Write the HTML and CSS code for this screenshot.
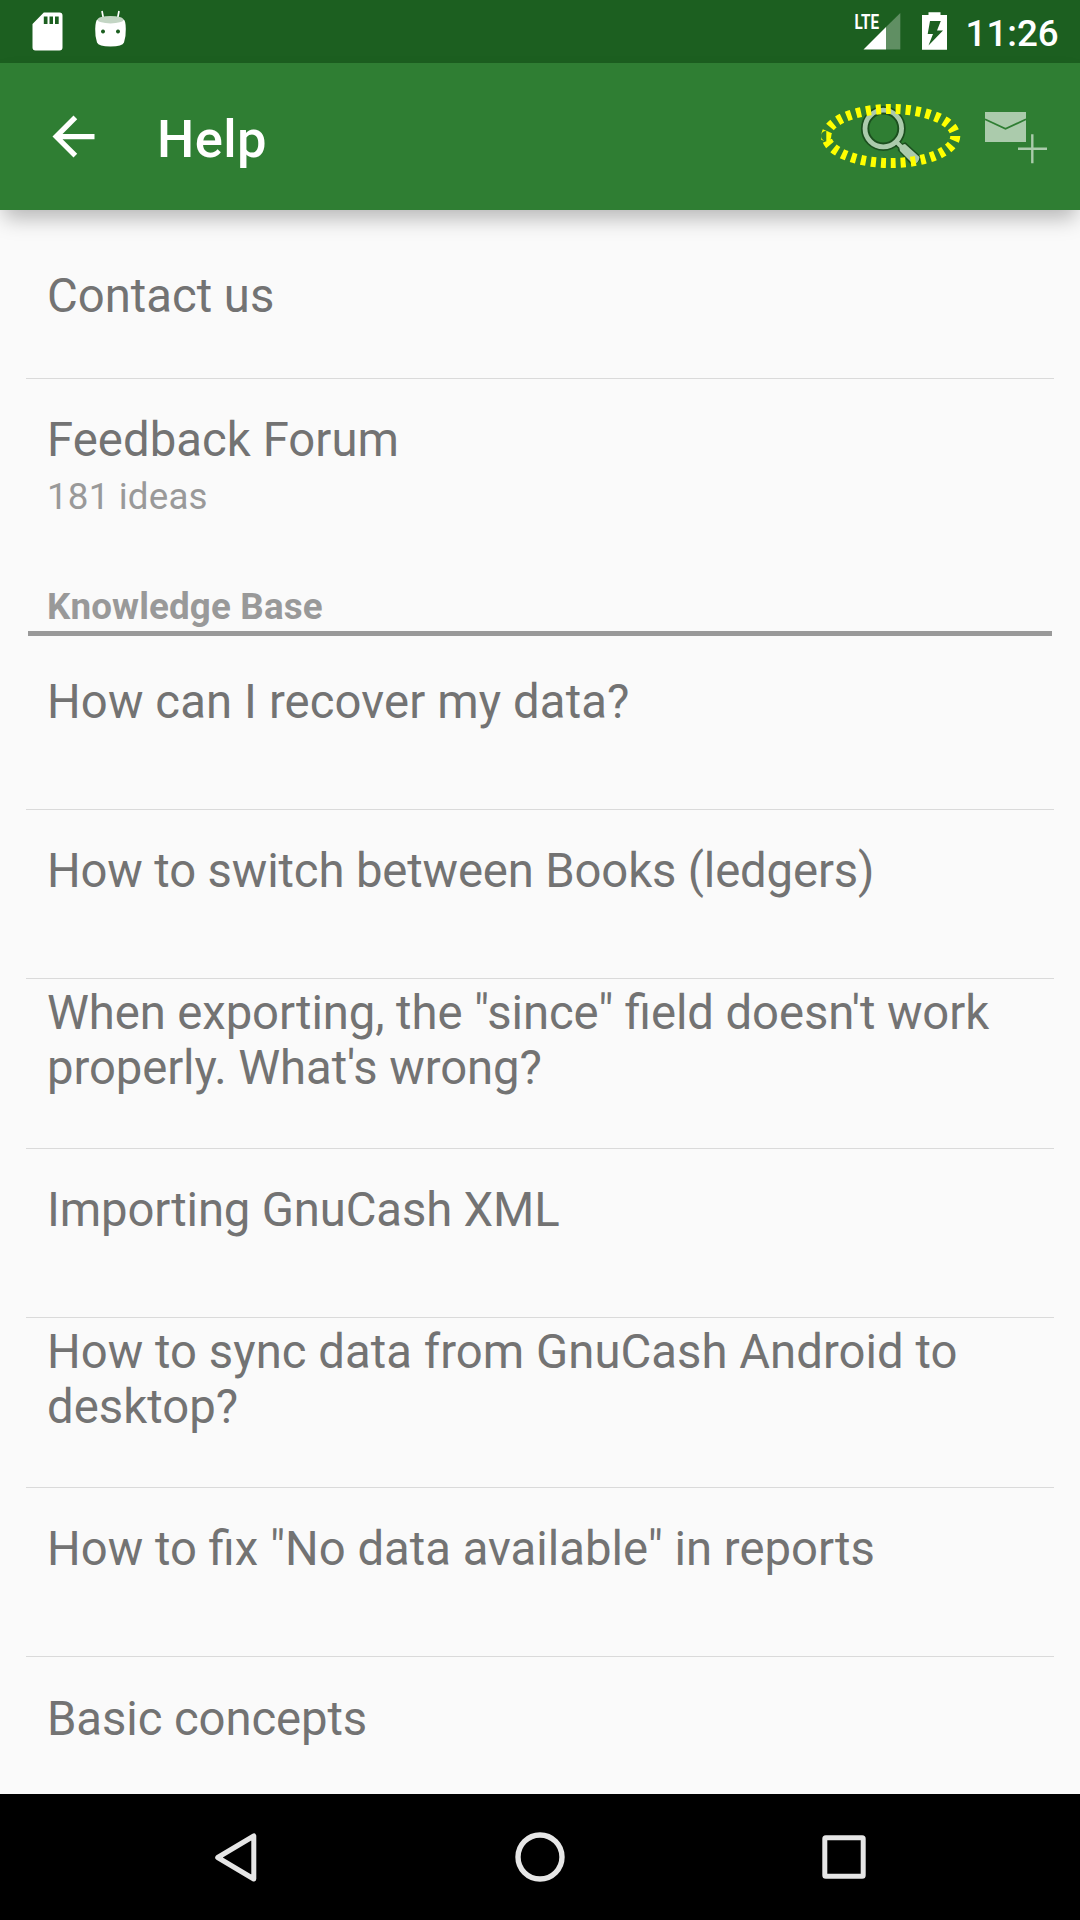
FILE: index.html
```html
<!DOCTYPE html>
<html lang="en">
<head>
<meta charset="utf-8">
<title>Help</title>
<link rel="stylesheet" href="styles.css">
</head>
<body>
<div class="screen">
  <div class="status-bar">
    <svg class="status-notifications" viewBox="0 0 140 63" width="140" height="63">
      <path fill="#fff" fill-rule="evenodd" d="M43.8 12.5H59.500a3 3 0 0 1 3 3V47.500a3 3 0 0 1-3 3H35.500a3 3 0 0 1-3-3V24zM43.800 16.500V24H47.500V16.500zM49.500 16.500V24H53V16.500zM55 16.500V24H58.700V16.500z"/>
      <path stroke="#fff" stroke-width="1.700" d="M102 11l1.500 8M119 11l-1.500 8"/>
      <path fill="#fff" fill-rule="evenodd" d="M97.500 19.500Q110.500 26 123.500 19.500Q125.700 20 125.800 29Q126 37 124 42.500Q122.500 46.500 110.500 46.500Q98.500 46.500 97 42.500Q95 37 95.200 29Q95.500 20 97.500 19.500zM103 29.500a2 2 0 1 0 .01 0zM118 29.500a2 2 0 1 0 .01 0z"/>
      <ellipse cx="110.500" cy="19.700" rx="13" ry="3.700" fill="#c3d5c4"/>
    </svg>
    <svg class="status-system" viewBox="850 0 105 63" width="105" height="63">
      <text class="lte" x="854.500" y="29" textLength="24.500" lengthAdjust="spacingAndGlyphs">LTE</text>
      <path fill="#fff" d="M863.500 49.500L886 27V49.500z"/>
      <path fill="#fff" fill-opacity=".3" d="M886 27L900.300 13V49.500H886z"/>
      <path fill="#fff" fill-rule="evenodd" d="M928.500 12.300H940.500V15H947V49.800H922V15H928.500zM930 21L927.700 34H933L928.500 45.500L943 30.500H937L940.800 21z"/>
    </svg>
    <span class="clock">11:26</span>
  </div>
  <header class="app-bar">
    <svg class="back" viewBox="0 0 24 24" width="63" height="63"><path fill="#fff" d="M20 11H7.830l5.590-5.590L12 4l-8 8 8 8 1.410-1.410L7.830 13H20v-2z"/></svg>
    <h1 class="title">Help</h1>
    <svg class="actions" viewBox="815 63 265 147" width="265" height="147">
      <g fill="none" stroke="#123c15" stroke-opacity=".7">
        <circle cx="883.300" cy="128.500" r="18.200" stroke-width="8.400"/>
        <path stroke-width="2.500" stroke-linejoin="round" d="M895 144l5 4.500l-1 1.500L913 165L920.500 158L905 143.500L902 145L897.500 140.500"/>
      </g>
      <circle cx="883.300" cy="128.500" r="18.300" fill="none" stroke="#abcbac" stroke-width="4.800"/>
      <path stroke="#abcbac" stroke-width="4" d="M895.500 141l6 6"/>
      <path fill="#abcbac" d="M899.500 148.500Q901 144.500 905 144L919.500 157Q919 163 913.500 164.500L900 151z"/>
      <ellipse cx="890.800" cy="136" rx="64.500" ry="27" fill="none" stroke="#ff0" stroke-width="10" pathLength="300" stroke-dasharray="5 5"/>
      <path fill="#abcbac" d="M985 112h41v30h-41z"/>
      <path fill="none" stroke="#2f7e33" stroke-width="1.800" d="M985 119.300l20.500 9.500 20.500-9.500"/>
      <path stroke="#abcbac" stroke-width="2.400" d="M1018 148.700h29M1032.300 134.300v29"/>
    </svg>
  </header>
  <main class="content">
    <div class="row contact"><span class="name">Contact us</span></div>
    <div class="row forum"><span class="name">Feedback Forum</span><span class="detail">181 ideas</span></div>
    <h2 class="section">Knowledge Base</h2>
    <div class="articles">
      <div class="row article loose">How can I recover my data?</div>
      <div class="row article tight">How to switch between Books (ledgers)</div>
      <div class="row article snug">When exporting, the "since" field doesn't work properly. What's wrong?</div>
      <div class="row article tight">Importing GnuCash XML</div>
      <div class="row article roomy">How to sync data from GnuCash Android to desktop?</div>
      <div class="row article">How to fix "No data available" in reports</div>
      <div class="row article snug">Basic concepts</div>
    </div>
  </main>
  <nav class="nav-bar">
    <svg viewBox="0 0 60 60" width="60" height="60"><path d="M11.700 30.500L47.800 9V52z" stroke-width="5" stroke-linejoin="round"/></svg>
    <svg viewBox="0 0 60 60" width="60" height="60"><circle cx="30" cy="30" r="22" stroke-width="5.400"/></svg>
    <svg viewBox="0 0 60 60" width="60" height="60"><rect x="10.800" y="10.800" width="38.400" height="38.400" rx="1" stroke-width="5"/></svg>
  </nav>
</div>
</body>
</html>
```
FILE: styles.css
```css
* { box-sizing: border-box; }

body {
  margin: 0;
  font-family: Roboto, sans-serif;
  font-feature-settings: "liga" 1;
}

svg { display: block; flex: none; }

.screen {
  display: flex;
  flex-direction: column;
  width: 1080px;
  height: 1920px;
  overflow: hidden;
  background: #fafafa;
}

.status-bar {
  display: flex;
  align-items: center;
  flex: none;
  height: 63px;
  background: #1c5f20;
}

.status-system { margin-left: auto; }

.lte {
  font-size: 21px;
  font-weight: 700;
  fill: #fff;
}

.clock {
  width: 125px;
  padding: 3px 0 0 10.5px;
  color: #fff;
  font-size: 36.75px;
  font-weight: 500;
  line-height: 43px;
}

.app-bar {
  display: flex;
  align-items: center;
  flex: none;
  height: 147px;
  padding-left: 42px;
  background: #2f7e33;
  box-shadow: 0 12px 20px -4px rgba(0, 0, 0, .28);
}

.title {
  margin: 0 0 0 52px;
  padding-top: 4px;
  color: #fff;
  font-size: 52.5px;
  font-weight: 500;
  letter-spacing: .4px;
  line-height: 62px;
}

.actions { margin-left: auto; }

.content {
  flex: 1;
  min-height: 0;
  overflow: hidden;
  padding: 0 26px;
  color: #737373;
  font-size: 47.25px;
  line-height: 55.4px;
  margin-top: 30px;
}

.row {
  display: flex;
  flex-direction: column;
  border-bottom: 1px solid #dadada;
  padding: 0 21px;
}

.contact { height: 139px; padding-top: 29px; }

.forum {
  height: 187px;
  padding-top: 34px;
  border-bottom: 0;
  letter-spacing: .07px;
}

.detail {
  margin-top: 7px;
  color: #999;
  font-size: 36.75px;
  letter-spacing: .17px;
  line-height: 43px;
}

.section {
  height: 70px;
  margin: 0 2px;
  padding: 19px 19px 0;
  border-bottom: 5px solid #999;
  color: #999;
  font-size: 36.75px;
  font-weight: 700;
  letter-spacing: .15px;
  line-height: 43px;
}

.articles { padding-top: 4px; }

.article {
  justify-content: center;
  height: 169.5px;
  padding-bottom: 44px;
}

.loose { letter-spacing: .12px; }
.roomy { letter-spacing: .04px; }
.snug { letter-spacing: -.09px; }
.tight { letter-spacing: -.14px; }

.nav-bar {
  display: flex;
  justify-content: center;
  align-items: center;
  gap: 244px;
  flex: none;
  height: 126px;
  background: #000;
  fill: none;
  stroke: #e6e6e6;
}
```
